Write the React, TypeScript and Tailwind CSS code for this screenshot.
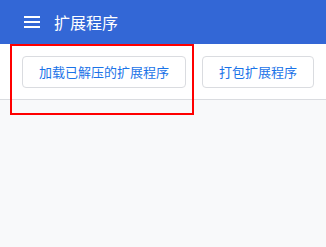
import React from "react";

export default function App() {
  const font = { fontFamily: '"Noto Sans CJK SC", "Noto Sans", sans-serif' };
  return (
    <div className="w-[326px] h-[247px] bg-[#f8f9fa] relative overflow-hidden" style={font}>
      <header className="h-[44px] bg-[#3367d6] flex items-center pl-6 gap-[14px]">
        <svg width="16" height="12" viewBox="0 0 16 12" className="block">
          <rect x="0" y="0" width="16" height="2" fill="white" />
          <rect x="0" y="5" width="16" height="2" fill="white" />
          <rect x="0" y="10" width="16" height="2" fill="white" />
        </svg>
        <span className="text-white text-[16px] leading-none">扩展程序</span>
      </header>
      <div className="h-[56px] bg-white border-b border-[#dadce0] flex items-center pl-[22px] gap-[16px]">
        <button className="h-[32px] px-4 rounded-[4px] border border-[#dadce0] bg-white text-[#1a73e8] text-[13px] leading-none">
          加载已解压的扩展程序
        </button>
        <button className="h-[32px] px-4 rounded-[4px] border border-[#dadce0] bg-white text-[#1a73e8] text-[13px] leading-none">
          打包扩展程序
        </button>
      </div>
      <div className="absolute left-[10px] top-[44px] w-[184px] h-[71px] border-2 border-[#ff0000] pointer-events-none" />
    </div>
  );
}
